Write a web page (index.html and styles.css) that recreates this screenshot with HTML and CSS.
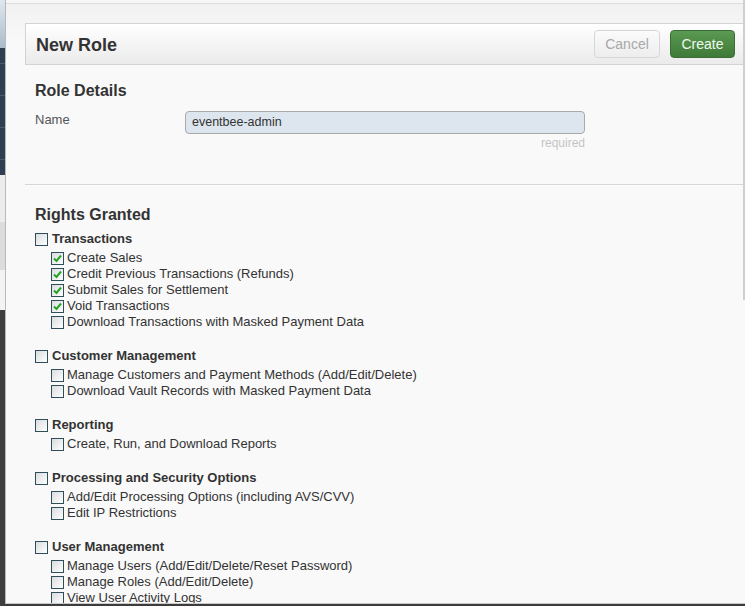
FILE: index.html
```html
<!DOCTYPE html>
<html>
<head>
<meta charset="utf-8">
<link rel="stylesheet" href="styles.css">
</head>
<body>
<div class="page">
  <div class="backdrop">
    <div class="bd bd-sky"></div>
    <div class="bd bd-nav"><i></i><i></i><i></i><i></i></div>
    <div class="bd bd-l1"></div>
    <div class="bd bd-l2"></div>
    <div class="bd bd-l3"></div>
    <div class="bd bd-dark"></div>
  </div>
  <div class="modal">
    <div class="modal-top"></div>
    <div class="modal-inner">
      <div class="header">
        <h1 class="title">New Role</h1>
        <div class="actions">
          <button class="btn btn-cancel">Cancel</button>
          <button class="btn btn-create">Create</button>
        </div>
      </div>
      <div class="section details">
        <h2 class="sec-title">Role Details</h2>
        <div class="field">
          <label class="field-label">Name</label>
          <div class="field-control">
            <div class="input">eventbee-admin</div>
            <div class="hint">required</div>
          </div>
        </div>
      </div>
      <div class="divider"></div>
      <div class="section rights">
        <h2 class="sec-title">Rights Granted</h2>

        <div class="group">
          <div class="group-head"><span class="cb"></span><span>Transactions</span></div>
          <div class="item"><span class="cb checked"><svg viewBox="0 0 11 11"><path d="M2 5.5 L4.5 8 L9 2.5" /></svg></span><span>Create Sales</span></div>
          <div class="item"><span class="cb checked"><svg viewBox="0 0 11 11"><path d="M2 5.5 L4.5 8 L9 2.5" /></svg></span><span>Credit Previous Transactions (Refunds)</span></div>
          <div class="item"><span class="cb checked"><svg viewBox="0 0 11 11"><path d="M2 5.5 L4.5 8 L9 2.5" /></svg></span><span>Submit Sales for Settlement</span></div>
          <div class="item"><span class="cb checked"><svg viewBox="0 0 11 11"><path d="M2 5.5 L4.5 8 L9 2.5" /></svg></span><span>Void Transactions</span></div>
          <div class="item"><span class="cb"></span><span>Download Transactions with Masked Payment Data</span></div>
        </div>

        <div class="group">
          <div class="group-head"><span class="cb"></span><span>Customer Management</span></div>
          <div class="item"><span class="cb"></span><span>Manage Customers and Payment Methods (Add/Edit/Delete)</span></div>
          <div class="item"><span class="cb"></span><span>Download Vault Records with Masked Payment Data</span></div>
        </div>

        <div class="group">
          <div class="group-head"><span class="cb"></span><span>Reporting</span></div>
          <div class="item"><span class="cb"></span><span>Create, Run, and Download Reports</span></div>
        </div>

        <div class="group">
          <div class="group-head"><span class="cb"></span><span>Processing and Security Options</span></div>
          <div class="item"><span class="cb"></span><span>Add/Edit Processing Options (including AVS/CVV)</span></div>
          <div class="item"><span class="cb"></span><span>Edit IP Restrictions</span></div>
        </div>

        <div class="group">
          <div class="group-head"><span class="cb"></span><span>User Management</span></div>
          <div class="item"><span class="cb"></span><span>Manage Users (Add/Edit/Delete/Reset Password)</span></div>
          <div class="item"><span class="cb"></span><span>Manage Roles (Add/Edit/Delete)</span></div>
          <div class="item"><span class="cb"></span><span>View User Activity Logs</span></div>
        </div>
      </div>
    </div>
    <div class="scroll-thumb"></div>
  </div>
</div>
</body>
</html>
```

FILE: styles.css
```css
* { box-sizing: border-box; }
html, body { margin: 0; padding: 0; }
body {
  width: 745px;
  height: 606px;
  overflow: hidden;
  font-family: "Liberation Sans", Arial, sans-serif;
  color: #333;
  background: #3c3c3c;
}
.page {
  display: flex;
  height: 606px;
}
.backdrop {
  width: 5px;
  display: flex;
  flex-direction: column;
  flex: none;
}
.bd { flex: none; }
.bd-sky { height: 48px; background: linear-gradient(#dfe7ee, #a9bccb); }
.bd-nav {
  height: 127px;
  background: #2d3f50;
  display: flex;
  flex-direction: column;
  justify-content: space-around;
}
.bd-nav i { display: block; height: 1px; background: #4a5b6b; }
.bd-l1 { height: 47px; background: #ececec; }
.bd-l2 { height: 48px; background: #dcdcdc; }
.bd-l3 { height: 40px; background: #f3f3f3; }
.bd-dark { flex: 1; background: #3e3e3e; }

.modal {
  position: relative;
  flex: 1;
  height: 604px;
  background: #f9f9f9;
  border-left: 1px solid #b9b9b9;
  border-bottom: 1px solid #c8c8c8;
  display: flex;
  flex-direction: column;
  overflow: hidden;
}
.modal-top {
  height: 4px;
  background: #f6f6f6;
  border-bottom: 1px solid #dcdcdc;
  flex: none;
}
.modal-inner {
  padding: 19px 0 0 19px;
  background: linear-gradient(#f1f1f1, #f9f9f9 40px);
}
.scroll-thumb {
  position: absolute;
  right: 0;
  top: 0;
  width: 2px;
  height: 300px;
  background: #cfcfcf;
}

.header {
  height: 42px;
  border: 1px solid #d3d3d3;
  border-right: none;
  background: linear-gradient(#ffffff, #f3f3f3 60%, #ebebeb);
  display: flex;
  align-items: center;
  justify-content: space-between;
  padding: 0 10px 0 10px;
}
.title {
  margin: 0;
  font-size: 18px;
  font-weight: bold;
  color: #333;
  line-height: 22px;
  padding-top: 1px;
}
.actions {
  display: flex;
  gap: 10px;
}
.btn {
  font-family: "Liberation Sans", Arial, sans-serif;
  font-size: 14px;
  height: 28px;
  border-radius: 4px;
  padding: 0;
  line-height: 26px;
}
.btn-cancel {
  width: 66px;
  color: #a8a8a8;
  background: linear-gradient(#fbfbfb, #ededed);
  border: 1px solid #d6d6d6;
}
.btn-create {
  width: 65px;
  color: #f2f8f0;
  background: linear-gradient(#5a9a52, #3f7a38);
  border: 1px solid #3a6e34;
}

.section { padding-left: 10px; }
.sec-title {
  margin: 0;
  font-size: 16px;
  font-weight: bold;
  line-height: 20px;
  color: #333;
}
.details { padding-top: 16px; height: 119px; }
.field {
  display: flex;
  margin-top: 10px;
}
.field-label {
  width: 150px;
  font-size: 13px;
  color: #555;
  line-height: 16px;
  padding-top: 1px;
}
.field-control {
  width: 400px;
  display: flex;
  flex-direction: column;
  align-items: flex-end;
}
.input {
  width: 400px;
  height: 23px;
  border: 1px solid #a9a9a9;
  border-radius: 4px;
  background: #dde6ef;
  font-size: 12.5px;
  line-height: 21px;
  padding-left: 6px;
  color: #333;
}
.hint {
  font-size: 12px;
  color: #c4c4c4;
  line-height: 14px;
  margin-top: 2px;
}
.divider {
  height: 2px;
  border-top: 1px solid #d5d5d5;
  background: #fdfdfd;
}
.rights { padding-top: 19px; }
.group { margin-top: 6px; }
.group + .group { margin-top: 18px; }
.group-head {
  display: flex;
  align-items: center;
  gap: 4px;
  font-size: 13px;
  font-weight: bold;
  line-height: 16px;
  color: #333;
  margin-bottom: 3px;
}
.item {
  display: flex;
  align-items: center;
  gap: 3px;
  padding-left: 16px;
  font-size: 13px;
  line-height: 16px;
  color: #333;
}
.cb {
  width: 13px;
  height: 13px;
  flex: none;
  border: 1px solid #2f4d5b;
  background: linear-gradient(135deg, #d9dcdf, #f4f4f4 70%, #ffffff);
  display: inline-flex;
  align-items: center;
  justify-content: center;
}
.cb svg {
  width: 11px;
  height: 11px;
}
.cb svg path {
  fill: none;
  stroke: #27a327;
  stroke-width: 2;
}
```
